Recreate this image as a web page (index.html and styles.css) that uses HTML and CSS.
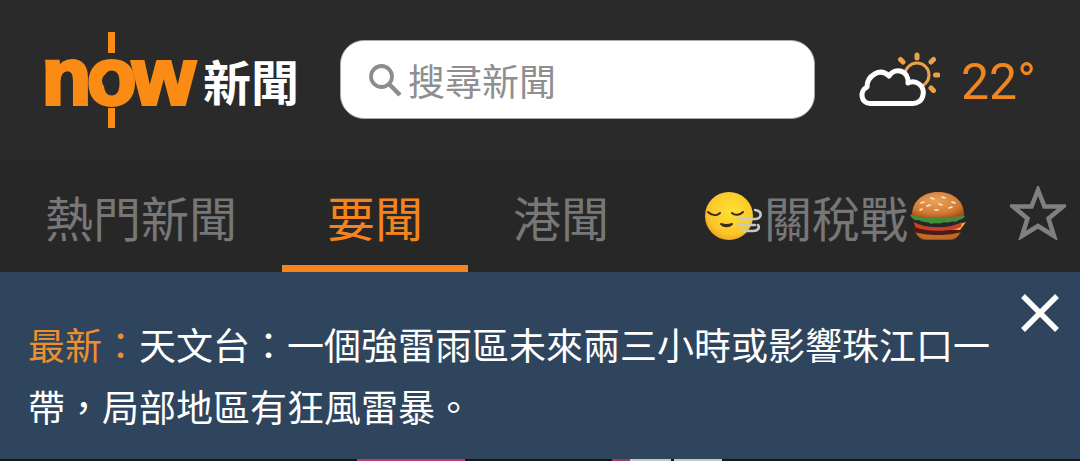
FILE: index.html
```html
<!DOCTYPE html>
<html lang="zh-Hant">
<head>
  <meta charset="UTF-8" />
  <title>Now 新聞</title>
  <link rel="stylesheet" href="styles.css">
</head>
<body>
  <header class="top-bar">
    <div class="logo">
      <span class="logo-now">now<i class="logo-hole"></i><i class="logo-tick logo-tick-up"></i><i class="logo-tick logo-tick-down"></i></span>
      <span class="logo-news">新聞</span>
    </div>
    <div class="search-box">
      <svg class="search-icon" viewBox="0 0 34 34" width="34" height="34">
        <circle cx="13.5" cy="13.5" r="10.500" fill="none" stroke="#8c8c8c" stroke-width="3.8" />
        <path d="M21 21 L32 32" stroke="#8c8c8c" stroke-width="4.400" fill="none" />
      </svg>
      <span class="search-text">搜尋新聞</span>
    </div>
    <div class="weather">
      <svg class="weather-icon" viewBox="0 0 82 56" width="82" height="56">
        <g stroke="#eda24a" fill="none" stroke-linecap="round">
          <circle cx="59" cy="23" r="12" stroke-width="3" />
          <path d="M59 3 V6 M73 10 L75.500 7.500 M77.500 23 H80 M73 36 L75.500 38.500 M45 10 L42.500 7.500" stroke-width="5" />
        </g>
        <path d="M12 51.500 C3 51.500 1 39 9 35 C9 24 22 15 31 24 C37 15 51 18 50 31 C58 27 67 34 65 43 C64 49 59 51.500 55 51.500 Z" fill="#2a2a2a" stroke="#fff" stroke-width="5" stroke-linejoin="round" />
      </svg>
      <span class="temp">22°</span>
    </div>
  </header>

  <nav class="tabs">
    <a class="tab">熱門新聞</a>
    <a class="tab tab-active">要聞</a>
    <a class="tab">港聞</a>
    <a class="tab tab-special">
      <svg class="emoji" viewBox="0 0 60 48" width="60" height="48">
        <defs>
          <radialGradient id="faceFill" cx="55%" cy="40%" r="65%">
            <stop offset="0" stop-color="#fee133" />
            <stop offset="0.75" stop-color="#fbc52a" />
            <stop offset="1" stop-color="#ee9a1c" />
          </radialGradient>
          <radialGradient id="bunFill" cx="45%" cy="35%" r="70%">
            <stop offset="0" stop-color="#eaa35c" />
            <stop offset="0.7" stop-color="#d27a33" />
            <stop offset="1" stop-color="#a8501c" />
          </radialGradient>
        </defs>
        <circle cx="25" cy="24" r="24" fill="url(#faceFill)" />
        <path d="M4 20 C8 24 13 24 16 21 M28 21 C31 24 36 23 39 20" stroke="#3b2a14" stroke-width="2" fill="none" stroke-linecap="round" />
        <path d="M17 32 C20 35 25 35 28 32 C25 33 20 33 17 32 Z" fill="#3b2a14" stroke="#3b2a14" stroke-width="2" stroke-linejoin="round" />
        <path d="M35 27 H51 C58 27 59 19 51 18 M35 33 H51 M39 39 H49 C54 39 56 36 54 33" stroke="#c5cbc4" stroke-width="2.600" fill="none" stroke-linecap="round" />
      </svg><span>關稅戰</span><svg class="emoji emoji-burger" viewBox="0 0 56 48" width="56" height="48">
        <path d="M5 36 H51 C51 43 46 48 39 48 H17 C10 48 5 43 5 36 Z" fill="#c06a28" stroke="#7a3a14" stroke-width="1" />
        <path d="M4 33 C16 39 40 39 52 33 L51 40 C40 44 16 44 5 40 Z" fill="#4a1c12" />
        <path d="M34 37 L56 30 L50 38 Z" fill="#f5b73a" />
        <path d="M4 30 C16 37 40 37 52 30 L51 35 C40 40 16 40 5 35 Z" fill="#c8402a" />
        <path d="M0 23 C6 21 50 21 55 24 C53 28 49 27 46 30 C41 28 39 32 34 30 C29 33 25 30 21 32 C17 29 13 31 9 28 C5 29 2 27 0 23 Z" fill="#3f8f3a" />
        <path d="M2 23 C2 7 16 0 28 0 C41 0 54 7 54 23 C43 27 13 27 2 23 Z" fill="url(#bunFill)" />
        <path d="M11 11 L14 10 M21 6 L24 7 M32 5 L35 6 M42 10 L45 11 M17 14 L20 13 M29 12 L32 13 M39 16 L42 15 M25 18 L28 18 M10 18 L12 17" stroke="#fbeccb" stroke-width="1.600" stroke-linecap="round" />
      </svg>
    </a>
    <svg class="star" viewBox="0 0 56 54" width="56" height="54">
      <path d="M28 4 L34.500 20.500 L53 20.500 L38.500 32.500 L44 50 L28 40 L12 50 L17.500 32.500 L3 20.500 L21.500 20.500 Z" fill="none" stroke="#808080" stroke-width="4.500" />
    </svg>
  </nav>

  <section class="notice">
    <p class="notice-text"><span class="notice-label">最新：</span><span>天文台：一個強雷雨區未來兩三小時或影響珠江口一帶，局部地區有狂風雷暴。</span></p>
    <svg class="notice-close" viewBox="0 0 40 40" width="40" height="40">
      <path d="M3 3 L37 37 M37 3 L3 37" stroke="#fff" stroke-width="5.500" fill="none" />
    </svg>
  </section>

  <div class="next-strip">
    <i class="strip-pink"></i>
    <i class="strip-pink-small"></i>
    <i class="strip-grey"></i>
    <i class="strip-grey strip-grey-2"></i>
  </div>
</body>
</html>
```

FILE: styles.css
```css
* {
  box-sizing: border-box;
}

html,
body {
  margin: 0;
  height: 461px;
  overflow: hidden;
}

body {
  background-color: #2a2a2a;
  font-family: "Noto Sans CJK TC", "Noto Sans", sans-serif;
}

.top-bar {
  display: flex;
  align-items: center;
  height: 160px;
  padding-left: 45px;
  padding-bottom: 1px;
}

.logo {
  display: flex;
  align-items: center;
  width: 295px;
  flex-shrink: 0;
}

.logo-now {
  position: relative;
  width: 153px;
  margin-left: -3px;
  margin-top: -6px;
  font-family: "Liberation Sans", sans-serif;
  font-size: 80px;
  font-weight: bold;
  line-height: 80px;
  letter-spacing: -3.500px;
  color: #fa8c16;
  -webkit-text-stroke: 4px #fa8c16;
}

.logo-hole {
  position: absolute;
  left: 60px;
  top: 36px;
  width: 16px;
  height: 16px;
  background-color: #2a2a2a;
  border-radius: 50%;
}

.logo-tick {
  position: absolute;
  left: 66px;
  width: 7px;
  background-color: #fa8c16;
}

.logo-tick-up {
  top: -5px;
  height: 21px;
}

.logo-tick-down {
  top: 71px;
  height: 20px;
}

.logo-news {
  margin-left: 8px;
  font-size: 48px;
  font-weight: 700;
  line-height: 60px;
  color: #fff;
}

.search-box {
  display: flex;
  align-items: center;
  width: 475px;
  height: 79px;
  padding-left: 27px;
  background-color: #fff;
  border: 1px solid #aaa;
  border-radius: 24px;
  flex-shrink: 0;
}

.search-icon {
  flex-shrink: 0;
}

.search-text {
  margin-left: 6px;
  font-size: 37px;
  color: #8f8f8f;
}

.weather {
  display: flex;
  align-items: center;
  margin-left: 43px;
}

.weather-icon {
  flex-shrink: 0;
}

.temp {
  margin-top: 4px;
  margin-left: 21px;
  font-family: Roboto, sans-serif;
  font-size: 50px;
  font-weight: 400;
  color: #f0861f;
}

.tabs {
  display: flex;
  align-items: stretch;
  height: 112px;
  background-color: #272727;
}

.tab {
  display: flex;
  align-items: center;
  height: 112px;
  padding: 7px 45px 0;
  font-size: 48px;
  color: #777;
  border-bottom: 7px solid transparent;
  white-space: nowrap;
}

.tab-active {
  color: #f5841f;
  border-bottom-color: #f5841f;
}

.tab-special {
  padding-left: 50px;
  padding-right: 44px;
}

.emoji {
  flex-shrink: 0;
}

.emoji-burger {
  margin-left: 2px;
}

.star {
  align-self: center;
  margin-bottom: 6px;
}

.notice {
  position: relative;
  height: 187px;
  padding: 41px 84px 0 28px;
  background-color: #2f455d;
}

.notice-text {
  margin: 0;
  font-size: 37px;
  line-height: 62px;
  color: #fff;
}

.notice-label {
  color: #ed8f2c;
}

.notice-close {
  position: absolute;
  top: 21px;
  right: 20px;
}

.next-strip {
  display: flex;
  height: 2px;
  padding-left: 357px;
  background-color: #14181d;
}

.strip-pink {
  width: 108px;
  background-color: #b93a7a;
}

.strip-pink-small {
  width: 18px;
  margin-left: 147px;
  background-color: #9c3a6e;
}

.strip-grey {
  width: 41px;
  background-color: #c4c8cc;
}

.strip-grey-2 {
  width: 48px;
  margin-left: 3px;
}
```
